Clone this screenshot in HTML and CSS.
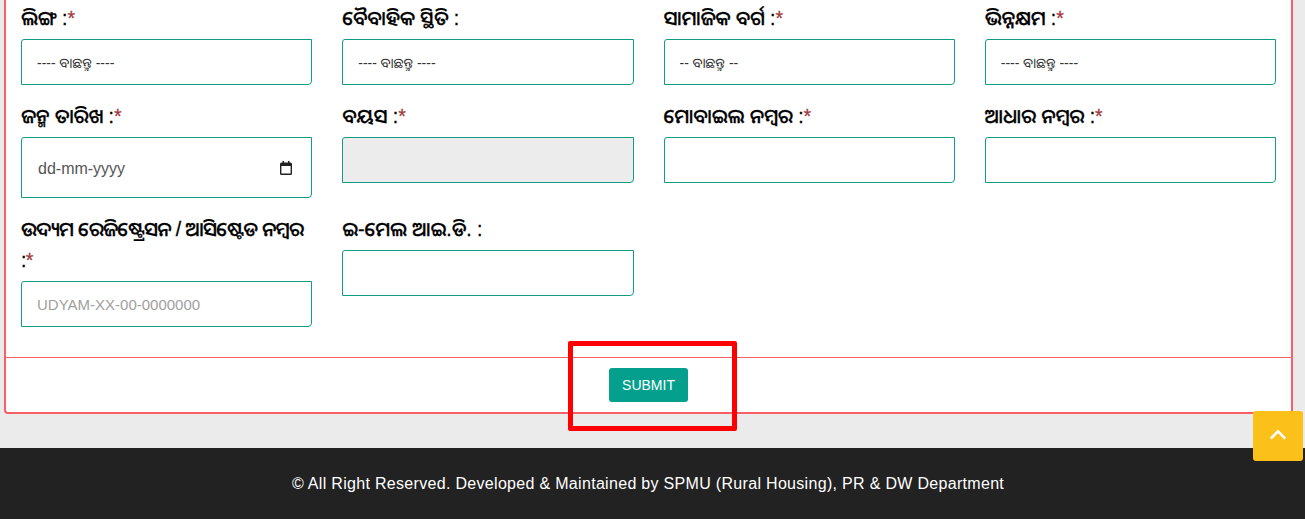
FILE: index.html
```html
<!DOCTYPE html>
<html lang="or">
<head>
<meta charset="utf-8">
<title>Form</title>
<link rel="stylesheet" href="styles.css">
</head>
<body>
<main class="page">
  <form class="card">
    <div class="fields">
      <div class="field"><label class="label">ଲିଙ୍ଗ :<span class="req">*</span></label><select class="control"><option>---- ବାଛନ୍ତୁ ----</option></select></div>
      <div class="field"><label class="label">ବୈବାହିକ ସ୍ଥିତି :</label><select class="control"><option>---- ବାଛନ୍ତୁ ----</option></select></div>
      <div class="field"><label class="label">ସାମାଜିକ ବର୍ଗ :<span class="req">*</span></label><select class="control"><option>-- ବାଛନ୍ତୁ --</option></select></div>
      <div class="field"><label class="label">ଭିନ୍ନକ୍ଷମ :<span class="req">*</span></label><select class="control"><option>---- ବାଛନ୍ତୁ ----</option></select></div>

      <div class="field"><label class="label">ଜନ୍ମ ତାରିଖ :<span class="req">*</span></label>
        <div class="control date"><span>dd-mm-yyyy</span>
          <svg class="cal" viewBox="0 0 12 14" width="12" height="14"><path fill-rule="evenodd" d="M2.5 0v1.5h-1A1.5 1.5 0 0 0 0 3v9.5A1.5 1.5 0 0 0 1.5 14h9a1.5 1.5 0 0 0 1.5-1.5V3a1.5 1.5 0 0 0-1.5-1.5h-1V0H8v1.5H4V0H2.5zM1.4 5h9.2v7.6H1.4V5z"/></svg>
        </div>
      </div>
      <div class="field"><label class="label">ବୟସ :<span class="req">*</span></label><input class="control" disabled></div>
      <div class="field"><label class="label">ମୋବାଇଲ ନମ୍ବର :<span class="req">*</span></label><input class="control"></div>
      <div class="field"><label class="label">ଆଧାର ନମ୍ବର :<span class="req">*</span></label><input class="control"></div>

      <div class="field"><label class="label label-long">ଉଦ୍ୟମ ରେଜିଷ୍ଟ୍ରେସନ / ଆସିଷ୍ଟେଡ ନମ୍ବର<br>:<span class="req">*</span></label><input class="control" placeholder="UDYAM-XX-00-0000000"></div>
      <div class="field"><label class="label">ଇ-ମେଲ ଆଇ.ଡି. :</label><input class="control"></div>
    </div>
    <div class="actions"><button class="submit" type="button">SUBMIT</button></div>
  </form>
</main>
<footer class="footer">© All Right Reserved. Developed &amp; Maintained by SPMU (Rural Housing), PR &amp; DW Department</footer>
<a class="to-top" href="#top" aria-label="Back to top"><svg viewBox="0 0 20 12" width="18" height="11"><path d="M2 10.5 10 2.5l8 8" fill="none" stroke="#fff" stroke-width="2.8"/></svg></a>
<div class="highlight"></div>
</body>
</html>
```
FILE: styles.css
```css
* { box-sizing: border-box; }
html, body { margin: 0; height: 519px; overflow: hidden; }
body {
  position: relative;
  background: #ebebeb;
  font-family: "Liberation Sans", Arial, sans-serif;
  color: #000;
}
.page { padding: 0 12px 34px 4px; height: 448px; }
.card {
  background: #fff;
  border: 2px solid #f85f66;
  border-top: 0;
  border-radius: 0 0 4px 4px;
  height: 414px;
}
.fields {
  display: grid;
  grid-template-columns: repeat(4, 1fr);
  align-items: start;
  align-content: start;
  padding-top: 3px;
  height: 358px;
  border-bottom: 1px solid #f85f66;
}
.field { padding: 0 15px; margin-bottom: 16px; }
.label {
  display: block;
  font-family: "Liberation Sans", "Noto Sans Oriya", sans-serif;
  font-size: 19.5px;
  font-weight: 500;
  line-height: 31px;
  margin-bottom: 5px;
  -webkit-text-stroke: 0.3px currentColor;
}
.label-long { letter-spacing: -0.6px; white-space: nowrap; }
.req { color: #a33b3b; }
.control {
  display: block;
  width: 100%;
  height: 46px;
  padding: 0 15px;
  border: 1px solid #129c88;
  border-radius: 3px 0 4px 0;
  background: #fff;
  font-family: "Liberation Sans", Arial, sans-serif;
  font-size: 15px;
  color: #333;
  outline: 0;
  appearance: none;
}
select.control {
  font-family: "Liberation Sans", "Noto Sans Oriya", sans-serif;
  font-size: 14px;
  padding-top: 2px;
}
input.control:disabled { background: #ececec; }
.control::placeholder { color: #a0a0a0; opacity: 1; }
.date {
  height: 61px;
  display: flex;
  align-items: center;
  justify-content: space-between;
  padding: 2px 19px 0 16px;
  font-size: 16px;
  color: #555;
}
.cal { fill: #222; margin-top: -2px; }
.actions { display: flex; justify-content: center; padding-top: 10px; }
.submit {
  width: 79px;
  height: 34px;
  border: 0;
  border-radius: 3px;
  background: #04a08d;
  color: #fff;
  font-family: "Liberation Sans", Arial, sans-serif;
  font-size: 14px;
}
.footer {
  height: 71px;
  padding-right: 9px;
  background: #222;
  color: #fff;
  display: flex;
  align-items: center;
  justify-content: center;
  font-size: 16px;
  letter-spacing: 0.31px;
}
.to-top {
  position: absolute;
  left: 1253px;
  top: 411px;
  width: 50px;
  height: 50px;
  padding-bottom: 4px;
  background: #fcc01a;
  border-radius: 3px;
  display: flex;
  align-items: center;
  justify-content: center;
}
.highlight {
  position: absolute;
  left: 568px;
  top: 341px;
  width: 169px;
  height: 90px;
  border: 5px solid #f00;
  border-radius: 2px;
}
```
